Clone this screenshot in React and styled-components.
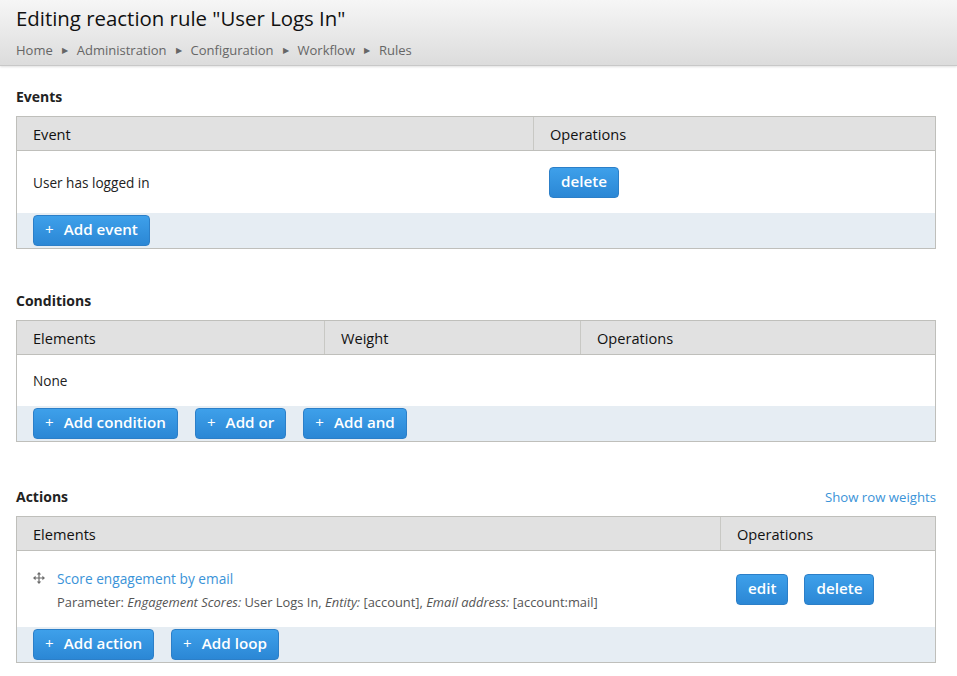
import React from 'react';
import styled, {createGlobalStyle} from 'styled-components';

const Global = createGlobalStyle`
  html, body {
    margin: 0;
    padding: 0;
    background: #fff;
    font-family: "Open Sans", "Liberation Sans", sans-serif;
    color: #222;
  }
`;

const Header = styled.header`
  height: 65px;
  padding: 0 16px;
  background: linear-gradient(#f6f6f6, #dcdcdc);
  border-bottom: 1px solid #c8c8c8;
  box-shadow: 0 1px 2px rgba(0, 0, 0, 0.12);
  display: flex;
  flex-direction: column;
`;

const Title = styled.h1`
  margin: 4px 0 0;
  font-size: 20.4px;
  font-weight: 400;
  line-height: 28px;
  color: #111;
`;

const Crumbs = styled.nav`
  margin-top: 9px;
  display: flex;
  align-items: center;
  font-size: 13px;
  color: #666;
  line-height: 18px;
`;

const Sep = styled.span`
  font-size: 8px;
  color: #666;
  margin: 0 9px 0 9px;
`;

const Main = styled.main`
  padding: 22px 21px 0 16px;
`;

const Section = styled.section`
  margin-bottom: ${(p) => p.gap || '0'};
`;

const SectionHead = styled.div`
  display: flex;
  justify-content: space-between;
  align-items: baseline;
  height: 18px;
  margin-bottom: 10px;
`;

const Heading = styled.h2`
  margin: 0;
  font-size: 14px;
  font-weight: 700;
  color: #222;
  line-height: 18px;
`;

const Link = styled.a`
  color: #3a93d8;
  text-decoration: none;
  font-size: ${(p) => p.size || '13.7px'};
`;

const Table = styled.div`
  border: 1px solid #bfbfbb;
  font-size: 13.6px;
`;

const Row = styled.div`
  display: grid;
  grid-template-columns: ${(p) => p.cols};
  height: ${(p) => p.h};
`;

const HeadRow = styled(Row)`
  background: #e1e1e1;
  border-bottom: 1px solid #bfbfbb;
  color: #111;
  font-size: 14.6px;
`;

const Cell = styled.div`
  padding: 0 15px 0 16px;
  display: flex;
  align-items: center;
  gap: 16px;
`;

const HeadCell = styled(Cell)`
  &:not(:first-child) {
    border-left: 1px solid #c8c8c4;
  }
`;

const Footer = styled.div`
  background: #e6edf3;
  height: 35px;
  padding: 0 16px;
  display: flex;
  align-items: center;
  gap: 17px;
`;

const Button = styled.button`
  height: 31px;
  padding: 0 11px 1px;
  border: 1px solid #2c7fc8;
  border-radius: 4px;
  background: linear-gradient(#3ea0ea, #2b87d5);
  color: #fff;
  font-family: inherit;
  font-size: 15.2px;
  font-weight: 600;
  cursor: pointer;
  white-space: pre;
  line-height: 1;
`;

const Plus = styled.span`
  font-weight: 400;
  margin-right: 10px;
`;

const ActionText = styled.div`
  display: flex;
  flex-direction: column;
  gap: 5px;
  margin-top: 1px;
`;

const ActionTitle = styled.div`
  display: flex;
  align-items: center;
  gap: 12px;
  margin-left: 0;
`;

const Param = styled.div`
  font-size: 12.9px;
  color: #555;
  padding-left: 24px;
  em {
    font-style: italic;
  }
`;

const AddBtn = ({children}) => (
  <Button><Plus>+</Plus>{children}</Button>
);

const DragIcon = () => (
  <svg width="12" height="12" viewBox="0 0 12 12">
    <path d="M6 2v8M2 6h8" stroke="#6b6b6b" strokeWidth="1.2" fill="none" />
    <path d="M6 0L3.8 2.6h4.4zM6 12l-2.2-2.6h4.4zM0 6l2.6-2.2v4.4zM12 6l-2.6-2.2v4.4z" fill="#6b6b6b" />
  </svg>
);

const crumbs = ['Home', 'Administration', 'Configuration', 'Workflow', 'Rules'];

export default function App() {
  return (
    <>
      <Global />
      <Header>
        <Title>Editing reaction rule "User Logs In"</Title>
        <Crumbs>
          {crumbs.map((c, i) => (
            <React.Fragment key={c}>
              {i > 0 && <Sep>▶</Sep>}
              <span>{c}</span>
            </React.Fragment>
          ))}
        </Crumbs>
      </Header>
      <Main>
        <Section gap="43px">
          <SectionHead><Heading>Events</Heading></SectionHead>
          <Table>
            <HeadRow cols="516px 1fr" h="33px">
              <HeadCell>Event</HeadCell>
              <HeadCell>Operations</HeadCell>
            </HeadRow>
            <Row cols="516px 1fr" h="62px">
              <Cell>User has logged in</Cell>
              <Cell><Button>delete</Button></Cell>
            </Row>
            <Footer><AddBtn>Add event</AddBtn></Footer>
          </Table>
        </Section>

        <Section gap="46px">
          <SectionHead><Heading>Conditions</Heading></SectionHead>
          <Table>
            <HeadRow cols="307px 256px 1fr" h="33px">
              <HeadCell>Elements</HeadCell>
              <HeadCell>Weight</HeadCell>
              <HeadCell>Operations</HeadCell>
            </HeadRow>
            <Row cols="1fr" h="51px">
              <Cell>None</Cell>
            </Row>
            <Footer>
              <AddBtn>Add condition</AddBtn>
              <AddBtn>Add or</AddBtn>
              <AddBtn>Add and</AddBtn>
            </Footer>
          </Table>
        </Section>

        <Section>
          <SectionHead>
            <Heading>Actions</Heading>
            <Link href="#" size="13.2px">Show row weights</Link>
          </SectionHead>
          <Table>
            <HeadRow cols="703px 1fr" h="33px">
              <HeadCell>Elements</HeadCell>
              <HeadCell>Operations</HeadCell>
            </HeadRow>
            <Row cols="703px 1fr" h="76px">
              <Cell>
                <ActionText>
                  <ActionTitle>
                    <DragIcon />
                    <Link href="#">Score engagement by email</Link>
                  </ActionTitle>
                  <Param>
                    Parameter: <em>Engagement Scores:</em> User Logs In, <em>Entity:</em> [account], <em>Email address:</em> [account:mail]
                  </Param>
                </ActionText>
              </Cell>
              <Cell>
                <Button>edit</Button>
                <Button>delete</Button>
              </Cell>
            </Row>
            <Footer>
              <AddBtn>Add action</AddBtn>
              <AddBtn>Add loop</AddBtn>
            </Footer>
          </Table>
        </Section>
      </Main>
    </>
  );
}
